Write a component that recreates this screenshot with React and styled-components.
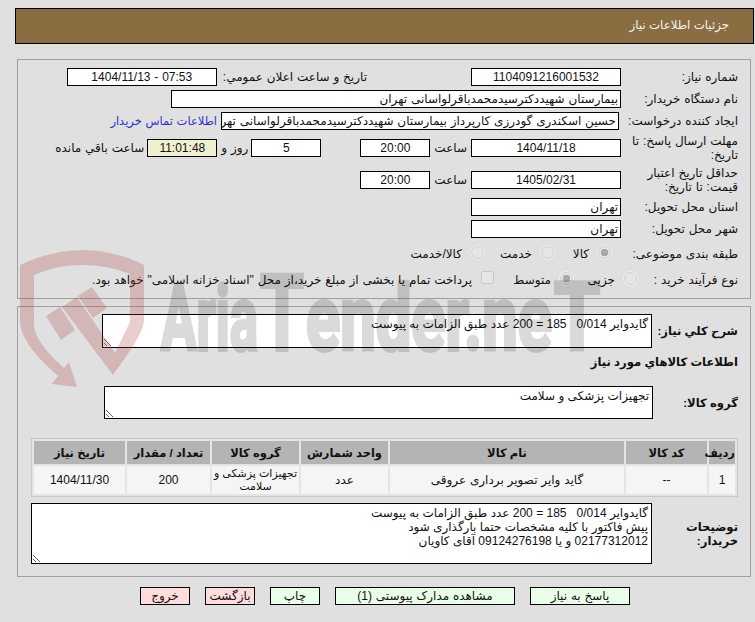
import React from 'react';
import styled, { createGlobalStyle } from 'styled-components';

const GlobalStyle = createGlobalStyle`
  html, body {
    margin: 0;
    background: #e0e0e0;
  }
  body {
    font-family: "Liberation Sans", "DejaVu Sans", sans-serif;
    font-size: 12px;
    word-spacing: 0.5px;
    color: #111;
  }
`;

const Watermark = () => (
  <WatermarkSvg viewBox="0 0 755 622" width="755" height="622" direction="ltr" aria-hidden="true">
    <g fill="#b04040" opacity="0.25">
      <path d="M20 265 C42 255 62 250 82 250 C104 250 124 255 144 265 L144 320 C143 335 125 358 113 375 L62 307 L77 297 L115 353 L130 322 L130 274 C115 268 98 265 82 265 C66 265 50 268 34 275 L34 325 C35 340 50 355 64 368 L69 362 L77 387 L52 384 L58 376 C40 360 20 340 20 320 Z" />
      <polygon points="46,316 60,307 75,330 61,340" />
      <polygon points="78,296 92,287 107,308 93,318" />
    </g>
    <g fill="#000" stroke="#000" strokeWidth="4" opacity="0.14" fontFamily="Roboto" fontWeight="700">
      <text x="161" y="350" fontSize="90" textLength="97" lengthAdjust="spacingAndGlyphs">Aria</text>
      <text x="260" y="350" fontSize="106" textLength="44" lengthAdjust="spacingAndGlyphs">T</text>
      <text x="306" y="350" fontSize="90" textLength="246" lengthAdjust="spacingAndGlyphs">ender.ne</text>
      <text x="554" y="350" fontSize="94" textLength="46" lengthAdjust="spacingAndGlyphs">T</text>
    </g>
  </WatermarkSvg>
);

export default function App() {
  return (
    <Page dir="rtl">
      <GlobalStyle />
      <Header>جزئیات اطلاعات نیاز</Header>

      <Panel>
        <Row>
          <Label>شماره نیاز:</Label>
          <ValueBox $w={150}>1104091216001532</ValueBox>
          <InlineLabel $mr={104} $ml={6}>تاریخ و ساعت اعلان عمومي:</InlineLabel>
          <ValueBox $w={150} dir="ltr">1404/11/13 - 07:53</ValueBox>
        </Row>
        <Row>
          <Label>نام دستگاه خریدار:</Label>
          <ValueBox $w={450} $start>بیمارستان شهیددکترسیدمحمدباقرلواسانی تهران</ValueBox>
        </Row>
        <Row>
          <Label>ایجاد کننده درخواست:</Label>
          <CreatorBox $w={398} $start>حسین اسکندری گودرزی کارپرداز بیمارستان شهیددکترسیدمحمدباقرلواسانی تهران</CreatorBox>
          <ContactLink href="#">اطلاعات تماس خریدار</ContactLink>
        </Row>
        <Row $h={32} $mt={2}>
          <Label>مهلت ارسال پاسخ: تا تاریخ:</Label>
          <ValueBox $w={150}>1404/11/18</ValueBox>
          <InlineLabel $mr={4} $ml={4}>ساعت</InlineLabel>
          <ValueBox $w={70}>20:00</ValueBox>
          <ValueBox $w={70} $mr={39}>5</ValueBox>
          <InlineLabel $mr={3} $ml={4}>روز و</InlineLabel>
          <ValueBox $w={70} $timer>11:01:48</ValueBox>
          <InlineLabel $mr={3} $ml={3}>ساعت باقي مانده</InlineLabel>
        </Row>
        <Row $h={32} $mt={0}>
          <Label>حداقل تاریخ اعتبار قیمت: تا تاریخ:</Label>
          <ValueBox $w={150}>1405/02/31</ValueBox>
          <InlineLabel $mr={4} $ml={4}>ساعت</InlineLabel>
          <ValueBox $w={70}>20:00</ValueBox>
        </Row>
        <Row $mt={2}>
          <Label>استان محل تحویل:</Label>
          <ValueBox $w={150} $start>تهران</ValueBox>
        </Row>
        <Row>
          <Label>شهر محل تحویل:</Label>
          <ValueBox $w={150} $start>تهران</ValueBox>
        </Row>
        <Row $h={26} $mt={3}>
          <Label>طبقه بندی موضوعی:</Label>
          <Options $mr={10}>
            <Option $w={57}><Radio type="radio" disabled defaultChecked name="subject" />کالا</Option>
            <Option $w={70}><Radio type="radio" disabled name="subject" />خدمت</Option>
            <Option><Radio type="radio" disabled name="subject" />کالا/خدمت</Option>
          </Options>
        </Row>
        <Row $h={26} $mt={0}>
          <Label>نوع فرآیند خرید :</Label>
          <Options $mr={-16}>
            <Option $w={64}><Radio type="radio" disabled name="process" />جزیی</Option>
            <Option $w={79}><Radio type="radio" disabled defaultChecked name="process" />متوسط</Option>
            <Option><Check type="checkbox" disabled />پرداخت تمام یا بخشی از مبلغ خرید،از محل "اسناد خزانه اسلامی" خواهد بود.</Option>
          </Options>
        </Row>
      </Panel>

      <LowerPanel>
        <Row $h={34} $mt={0}>
          <BoldLabel $w={86}>شرح کلي نیاز:</BoldLabel>
          <Notes $w={550} readOnly defaultValue="گایدوایر 0/014   185 = 200 عدد طبق الزامات به پیوست" />
        </Row>
        <Row $h={16} $mt={6}>
          <BoldLabel $w={200}>اطلاعات كالاهاي مورد نیاز</BoldLabel>
        </Row>
        <Row $h={33} $mt={16}>
          <BoldLabel $w={85}>گروه کالا:</BoldLabel>
          <Notes $w={549} readOnly defaultValue="تجهیزات پزشکی و سلامت" />
        </Row>

        <ItemsTable>
          <colgroup>
            <col width="26" />
            <col width="81" />
            <col width="234" />
            <col width="87" />
            <col width="87" />
            <col width="83" />
            <col width="91" />
          </colgroup>
          <thead>
            <tr>
              <Th>ردیف</Th>
              <Th>کد کالا</Th>
              <Th>نام کالا</Th>
              <Th>واحد شمارش</Th>
              <Th>گروه کالا</Th>
              <Th>تعداد / مقدار</Th>
              <Th>تاریخ نیاز</Th>
            </tr>
          </thead>
          <tbody>
            <tr>
              <Td>1</Td>
              <Td>--</Td>
              <Td>گاید وایر تصویر برداری عروقی</Td>
              <Td>عدد</Td>
              <GroupCell>تجهیزات پزشکی و<br />سلامت</GroupCell>
              <Td>200</Td>
              <Td>1404/11/30</Td>
            </tr>
          </tbody>
        </ItemsTable>

        <Row $h={61} $mt={6}>
          <BoldLabel $w={86}>توضیحات خریدار:</BoldLabel>
          <Notes
            $w={621}
            readOnly
            defaultValue={'گایدوایر 0/014   185 = 200 عدد طبق الزامات به پیوست\nپیش فاکتور با کلیه مشخصات حتما بارگذاری شود\n02177312012 و یا 09124276198 آقای کاویان'}
          />
        </Row>
      </LowerPanel>

      <Buttons>
        <ActionButton $w={100}>پاسخ به نیاز</ActionButton>
        <ActionButton $w={180}>مشاهده مدارک پیوستی (1)</ActionButton>
        <ActionButton $w={50}>چاپ</ActionButton>
        <ActionButton $w={50} $danger>بازگشت</ActionButton>
        <ActionButton $w={50} $danger>خروج</ActionButton>
      </Buttons>

      <Watermark />
    </Page>
  );
}

const Page = styled.div`
  position: relative;
  box-sizing: border-box;
  width: 755px;
  height: 622px;
  padding: 8px 1px 0 15px;
  overflow: hidden;
`;

const WatermarkSvg = styled.svg`
  position: absolute;
  top: 0;
  left: 0;
  pointer-events: none;
`;

const Header = styled.div`
  box-sizing: border-box;
  height: 36px;
  padding-right: 24px;
  border: 1px solid #000;
  background: #8b6d42;
  color: #f4f4f4;
  font-size: 11.8px;
  word-spacing: 0;
  line-height: 33px;
`;

const Panel = styled.div`
  box-sizing: border-box;
  height: 240px;
  margin: 15px 3px 0 2px;
  padding: 8px 12px 0 0;
  border: 1px solid #a0a0a0;
`;

const LowerPanel = styled(Panel)`
  height: 271px;
  margin-top: 7px;
  padding-top: 7px;
`;

const Row = styled.div`
  display: flex;
  align-items: center;
  height: ${(p) => p.$h || 18}px;
  margin-top: ${(p) => (p.$mt === undefined ? 4 : p.$mt)}px;
  &:first-child {
    margin-top: 0;
  }
`;

const Label = styled.div`
  flex: none;
  box-sizing: border-box;
  width: 117px;
  padding-left: 2px;
  line-height: 14px;
`;

const BoldLabel = styled.div`
  flex: none;
  width: ${(p) => p.$w}px;
  font-size: 11.6px;
  font-weight: 700;
  word-spacing: 0;
  line-height: 14px;
`;

const InlineLabel = styled.div`
  flex: none;
  margin: 0 ${(p) => p.$mr}px 0 ${(p) => p.$ml}px;
  white-space: nowrap;
`;

const ValueBox = styled.div`
  flex: none;
  box-sizing: border-box;
  width: ${(p) => p.$w}px;
  height: 18px;
  margin-right: ${(p) => p.$mr || 0}px;
  padding: 0 2px;
  border: 1px solid #000;
  background: ${(p) => (p.$timer ? '#f0f0d0' : '#fff')};
  font-size: 12px;
  line-height: 16px;
  text-align: ${(p) => (p.$start ? 'right' : 'center')};
  white-space: nowrap;
  overflow: hidden;
`;

const CreatorBox = styled(ValueBox)`
  margin-right: 2px;
`;

const ContactLink = styled.a`
  flex: none;
  margin-right: 4px;
  color: #3030d0;
  font-size: 11.5px;
  text-decoration: none;
  white-space: nowrap;
`;

const Options = styled.div`
  display: flex;
  align-items: center;
  margin-right: ${(p) => p.$mr || 0}px;
`;

const Option = styled.label`
  display: flex;
  align-items: center;
  flex: none;
  width: ${(p) => (p.$w ? `${p.$w}px` : 'auto')};
  white-space: nowrap;
`;

const Radio = styled.input`
  appearance: none;
  box-sizing: border-box;
  width: 13px;
  height: 13px;
  margin: -3px 0 0 9px;
  border: 1px solid #cfcfcf;
  border-radius: 50%;
  background: #e6e6e6;
  box-shadow: 0 0 0 1px #eee;
  &:checked {
    background: radial-gradient(circle, #a8a8a8 0 3.5px, #e6e6e6 4px);
  }
`;

const Check = styled.input`
  appearance: none;
  box-sizing: border-box;
  width: 13px;
  height: 13px;
  margin: -6px 0 0 9px;
  border: 1px solid #c8c8c8;
  border-radius: 2px;
  background: #e6e6e6;
`;

const Notes = styled.textarea`
  flex: none;
  box-sizing: border-box;
  display: block;
  width: ${(p) => p.$w}px;
  height: 100%;
  margin: 0;
  padding: 2px 3px;
  border: 1px solid #000;
  background: #fff;
  font-family: inherit;
  font-size: 12px;
  word-spacing: 0;
  line-height: 14px;
  color: #111;
  outline: none;
  resize: both;
`;

const ItemsTable = styled.table`
  box-sizing: border-box;
  width: 707px;
  height: 59px;
  margin-top: 19px;
  border: 1px solid #c8c8c8;
  border-spacing: 2px;
  table-layout: fixed;
  background: #e4e4e4;
`;

const Th = styled.th`
  height: 23px;
  padding: 0;
  background: #b4b4b4;
  font-size: 11.5px;
  font-weight: 700;
  word-spacing: 0;
  text-align: center;
`;

const Td = styled.td`
  height: 28px;
  padding: 0;
  background: #f5f5f5;
  font-size: 12px;
  line-height: 13px;
  text-align: center;
`;

const GroupCell = styled(Td)`
  font-size: 11px;
  word-spacing: 0;
  white-space: nowrap;
`;

const Buttons = styled.div`
  display: flex;
  gap: 15px;
  margin-top: 10px;
  padding-right: 124px;
`;

const ActionButton = styled.button`
  box-sizing: border-box;
  width: ${(p) => p.$w}px;
  height: 18px;
  padding: 0;
  border: 1px solid #000;
  background: ${(p) => (p.$danger ? '#ffdcdc' : '#eaffea')};
  color: #111;
  font-family: inherit;
  font-size: 12px;
  word-spacing: 0.5px;
  line-height: 16px;
`;
